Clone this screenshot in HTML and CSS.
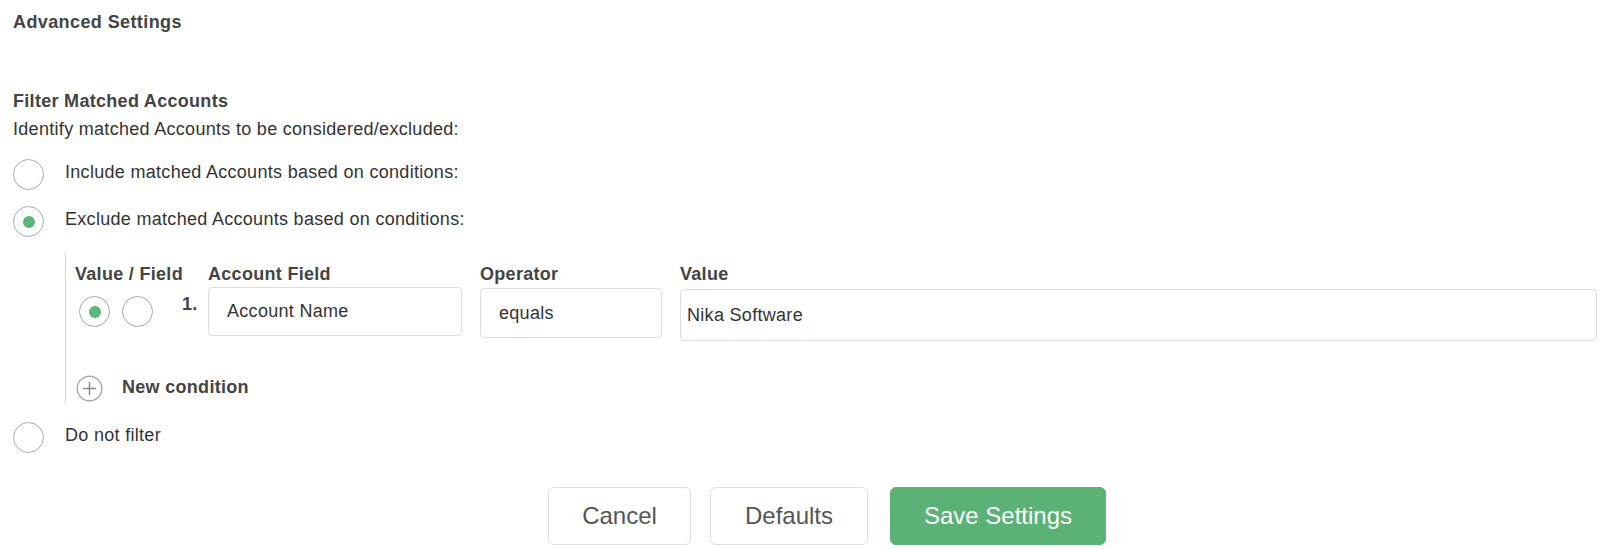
FILE: index.html
```html
<!DOCTYPE html>
<html lang="en">

<head>
    <meta charset="UTF-8">
    <meta name="viewport" content="width=device-width, initial-scale=1.0">
    <title>Advanced Settings</title>
    <link rel="stylesheet" href="styles.css">
</head>

<body>

    <div class="settings">
        <h2 class="title">Advanced Settings</h2>

        <h3 class="section-title">Filter Matched Accounts</h3>
        <p class="section-desc">Identify matched Accounts to be considered/excluded:</p>

        <div class="options">
            <label class="option">
                <span class="radio"></span>
                <span class="option-text">Include matched Accounts based on conditions:</span>
            </label>
            <label class="option">
                <span class="radio checked"></span>
                <span class="option-text">Exclude matched Accounts based on conditions:</span>
            </label>
        </div>

        <!-- Condiciones -->
        <div class="conditions">
            <div class="cond-head">
                <span class="col-type">Value / Field</span>
                <span class="col-field">Account Field</span>
                <span class="col-op">Operator</span>
                <span class="col-value">Value</span>
            </div>
            <div class="cond-row">
                <div class="col-type type-pick">
                    <span class="radio checked"></span>
                    <span class="radio"></span>
                    <span class="row-num">1.</span>
                </div>
                <div class="col-field"><input class="field-input" type="text" value="Account Name"></div>
                <div class="col-op"><input class="field-input op-input" type="text" value="equals"></div>
                <div class="col-value"><input class="field-input value-input" type="text" value="Nika Software"></div>
            </div>
            <div class="new-cond">
                <svg class="plus" width="27" height="27" viewBox="0 0 27 27">
                    <circle cx="13.5" cy="13.5" r="12.3" fill="none" stroke="#a9a9a9" stroke-width="1.4" />
                    <path d="M13.5 7v13M7 13.5h13" stroke="#8a8a8a" stroke-width="1.4" />
                </svg>
                <span class="new-cond-text">New condition</span>
            </div>
        </div>

        <label class="option no-filter">
            <span class="radio"></span>
            <span class="option-text">Do not filter</span>
        </label>

        <div class="actions">
            <button class="btn btn-cancel">Cancel</button>
            <button class="btn btn-defaults">Defaults</button>
            <button class="btn btn-save">Save Settings</button>
        </div>
    </div>

</body>

</html>
```

FILE: styles.css
```css
/* Pagina de ajustes avanzados */
body {
    font-family: 'Liberation Sans', Arial, sans-serif;
    background-color: #ffffff;
    color: #333333;
    letter-spacing: 0.3px;
    margin: 0;
    padding: 0;
}

.settings {
    padding: 11px 0 0 13px;
}

.title {
    font-size: 18px;
    line-height: 22px;
    color: #444444;
    letter-spacing: 0.4px;
    margin: 0;
}

.section-title {
    font-size: 18px;
    line-height: 28px;
    color: #444444;
    margin: 54px 0 0 0;
}

.section-desc {
    font-size: 18px;
    line-height: 28px;
    margin: 0;
}

.options {
    display: flex;
    flex-direction: column;
    gap: 16px;
    margin-top: 16px;
}

.option {
    display: flex;
    align-items: center;
    height: 31px;
}

.option-text {
    font-size: 18px;
    margin-left: 21px;
    margin-top: -4px;
}

.radio {
    box-sizing: border-box;
    width: 31px;
    height: 31px;
    border: 1.5px solid #aaaaaa;
    border-radius: 50%;
    display: flex;
    align-items: center;
    justify-content: center;
    flex-shrink: 0;
}

.radio.checked::after {
    content: "";
    width: 12px;
    height: 12px;
    border-radius: 50%;
    background-color: #5bb679;
}

/* Condiciones */
.conditions {
    margin: 16px 3px 0 52px;
    border-left: 1.5px solid #d4d4d4;
    padding: 10px 0 1px 9px;
}

.cond-head {
    display: flex;
    font-size: 18px;
    font-weight: bold;
    line-height: 22px;
    color: #444444;
}

.col-type {
    width: 133px;
    flex-shrink: 0;
}

.col-field {
    width: 254px;
    margin-right: 18px;
    flex-shrink: 0;
}

.col-op {
    width: 182px;
    margin-right: 18px;
    flex-shrink: 0;
}

.col-value {
    flex: 1;
}

.cond-row {
    display: flex;
    align-items: flex-start;
    margin-top: 2px;
}

.type-pick {
    display: flex;
    align-items: flex-start;
    gap: 12px;
    padding: 9px 0 0 4px;
    box-sizing: border-box;
}

.row-num {
    font-size: 18px;
    line-height: 22px;
    font-weight: bold;
    color: #444444;
    margin: -3px 0 0 17px;
}

.field-input {
    box-sizing: border-box;
    width: 100%;
    height: 49px;
    border: 1px solid #dddddd;
    border-radius: 4px;
    padding: 0 18px;
    font-family: 'Liberation Sans', Arial, sans-serif;
    font-size: 18px;
    letter-spacing: 0.3px;
    color: #333333;
    background-color: #ffffff;
    outline: none;
}

.op-input {
    height: 50px;
    margin-top: 1px;
}

.value-input {
    height: 52px;
    margin-top: 2px;
    padding: 0 6px;
}

.new-cond {
    display: flex;
    align-items: center;
    margin-top: 34px;
    padding-left: 1px;
}

.new-cond-text {
    font-size: 18px;
    font-weight: bold;
    color: #444444;
    margin: -2px 0 0 19px;
}

.no-filter {
    margin-top: 19px;
}

/* Botones */
.actions {
    display: flex;
    justify-content: center;
    padding-left: 41px;
    margin-top: 34px;
}

.btn {
    height: 58px;
    border: 1px solid #dddddd;
    border-radius: 6px;
    background-color: #ffffff;
    font-family: 'Liberation Sans', Arial, sans-serif;
    font-size: 24px;
    color: #555555;
    cursor: pointer;
}

.btn-cancel {
    width: 143px;
}

.btn-defaults {
    width: 158px;
    margin-left: 19px;
}

.btn-save {
    width: 216px;
    margin-left: 22px;
    background-color: #5ab276;
    border-color: #5ab276;
    color: #ffffff;
}
```
